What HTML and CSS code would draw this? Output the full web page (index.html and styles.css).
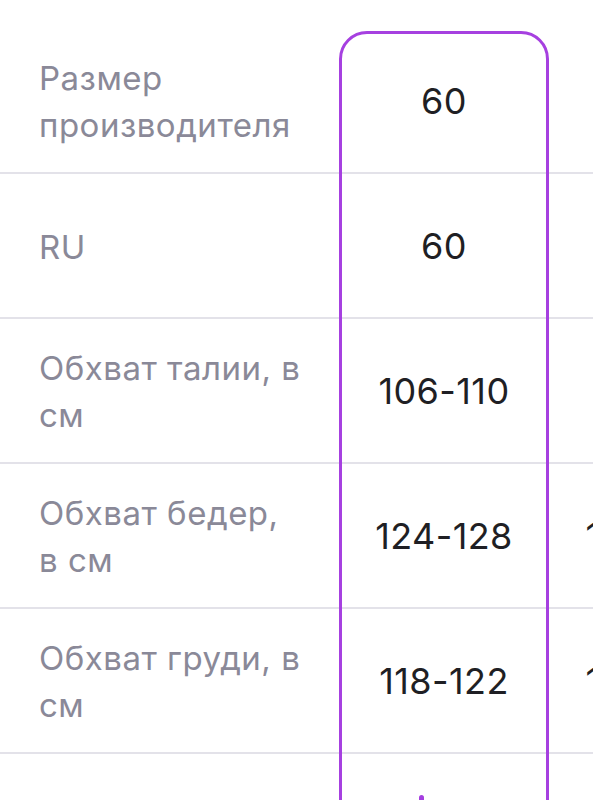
FILE: index.html
```html
<!DOCTYPE html>
<html lang="ru">
<head>
<meta charset="utf-8">
<link rel="stylesheet" href="styles.css">
</head>
<body>
<div class="table">
  <div class="row">
    <div class="label">Размер<br>производителя</div>
    <div class="val">60</div>
    <div class="val"></div>
  </div>
  <div class="row">
    <div class="label">RU</div>
    <div class="val">60</div>
    <div class="val"></div>
  </div>
  <div class="row">
    <div class="label">Обхват талии, в<br>см</div>
    <div class="val">106-110</div>
    <div class="val"></div>
  </div>
  <div class="row">
    <div class="label">Обхват бедер,<br>в см</div>
    <div class="val">124-128</div>
    <div class="val">128-132</div>
  </div>
  <div class="row">
    <div class="label">Обхват груди, в<br>см</div>
    <div class="val">118-122</div>
    <div class="val">122-126</div>
  </div>
  <div class="row">
    <div class="label"></div>
    <div class="val-top"><span class="mark"></span></div>
    <div class="val"></div>
  </div>
  <div class="highlight"></div>
</div>
</body>
</html>
```
FILE: styles.css
```css
html, body {
  margin: 0;
  padding: 0;
  background: #ffffff;
  overflow: hidden;
}
.table {
  position: relative;
  width: 593px;
  height: 800px;
  overflow: hidden;
  padding-top: 29px;
  box-sizing: border-box;
  font-family: Inter, "Noto Sans", sans-serif;
}
.row {
  display: grid;
  grid-template-columns: 339px 210px 210px;
  align-items: center;
  height: 143px;
  border-bottom: 2px solid #e3e2e9;
}
.label {
  padding: 3px 0 0 39px;
  color: #8a8998;
  font-size: 33px;
  letter-spacing: 0.5px;
  line-height: 47px;
  white-space: nowrap;
}
.val {
  text-align: center;
  color: #1f1f24;
  font-size: 36px;
  letter-spacing: 0.4px;
  padding-top: 1px;
  white-space: nowrap;
}
.val-top {
  align-self: start;
  height: 143px;
}
.mark {
  display: block;
  width: 5px;
  height: 8px;
  background: #a53fe0;
  border-radius: 3px 3px 0 0;
  margin-top: 41px;
  margin-left: 80px;
}
.highlight {
  position: absolute;
  left: 339px;
  top: 31px;
  width: 210px;
  height: 900px;
  box-sizing: border-box;
  border: 3px solid #a640e0;
  border-radius: 28px;
}
```
